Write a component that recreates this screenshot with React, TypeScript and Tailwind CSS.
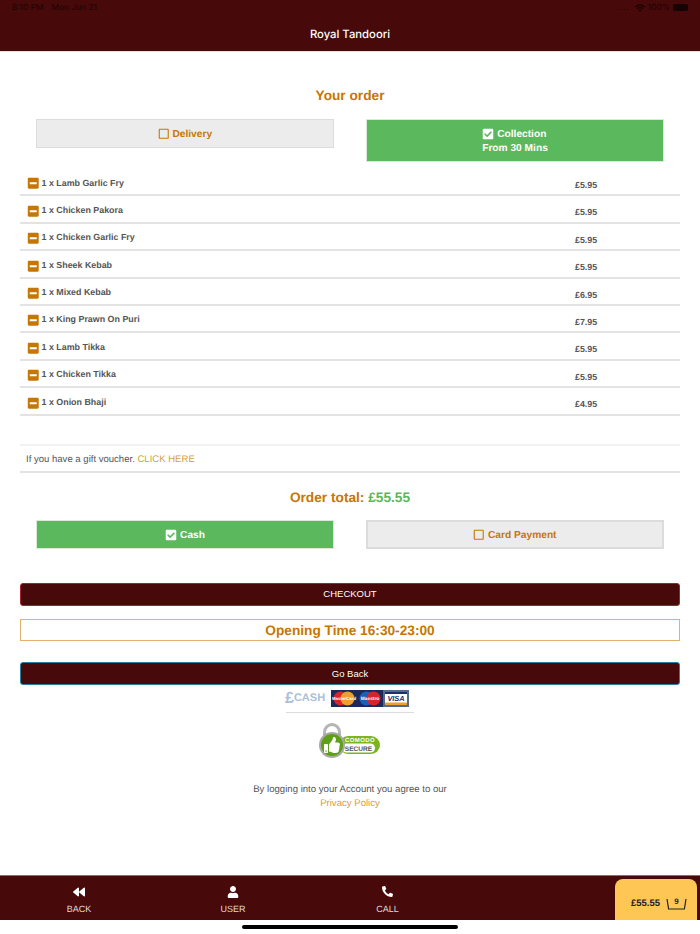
import { FaBackward, FaUser, FaPhoneAlt, FaCheckSquare, FaRegSquare, FaMinusSquare, FaWifi, FaThumbsUp } from "react-icons/fa";

const items: [string, string][] = [
  ["1 x Lamb Garlic Fry", "£5.95"],
  ["1 x Chicken Pakora", "£5.95"],
  ["1 x Chicken Garlic Fry", "£5.95"],
  ["1 x Sheek Kebab", "£5.95"],
  ["1 x Mixed Kebab", "£6.95"],
  ["1 x King Prawn On Puri", "£7.95"],
  ["1 x Lamb Tikka", "£5.95"],
  ["1 x Chicken Tikka", "£5.95"],
  ["1 x Onion Bhaji", "£4.95"],
];

function Choice({ label, sub, on, h, thick }: { label: string; sub?: string; on: boolean; h: string; thick?: boolean }) {
  return (
    <div className="px-4">
      <div
        className={`${h} ${thick ? "border-2" : "border"} flex flex-col items-center text-[10.2px] leading-[14px] font-bold ${
          on ? "bg-[#5cb85c] border-[#d9ead9] text-white" : "bg-[#ececec] border-[#dcdcdc] text-[#c67605]"
        }`}
      >
        <div className="flex flex-col items-start">
          <div className="flex items-center gap-[3px]">
            {on ? <FaCheckSquare className="text-[12px] -mt-[2px]" /> : <FaRegSquare className="text-[11.5px] -mt-[2px]" />}
            <span>{label}</span>
          </div>
          {sub && <div>{sub}</div>}
        </div>
      </div>
    </div>
  );
}

function PayLogos() {
  return (
    <div className="flex items-center justify-center h-[18px] gap-[4px] pr-[6px]">
      <div className="w-[42px] flex items-center text-[#a9bfd8] font-bold text-[11px] leading-none">
        <span className="text-[16px] leading-none">£</span>
        <span>CASH</span>
      </div>
      <div className="flex">
        <svg width="26" height="17" viewBox="0 0 26 17">
          <rect width="26" height="17" fill="#1b2a5c" />
          <circle cx="9.5" cy="8.5" r="7" fill="#d9222a" />
          <circle cx="16.5" cy="8.5" r="7" fill="#ee9f2d" />
          <text x="13" y="10" fontSize="4.4" fontWeight="700" fill="#fff" textAnchor="middle" fontFamily="Liberation Sans">MasterCard</text>
        </svg>
        <svg width="26" height="17" viewBox="0 0 26 17">
          <rect width="26" height="17" fill="#1b2a5c" />
          <circle cx="9.5" cy="8.5" r="7" fill="#1a5fc0" />
          <circle cx="16.5" cy="8.5" r="7" fill="#d9222a" />
          <text x="13" y="10" fontSize="4.8" fontWeight="700" fill="#fff" textAnchor="middle" fontFamily="Liberation Sans">Maestro</text>
        </svg>
        <svg width="26" height="17" viewBox="0 0 26 17">
          <rect width="26" height="17" fill="#54698c" />
          <rect x="2" y="2" width="22" height="13" fill="#fff" />
          <rect x="2" y="2" width="22" height="2" fill="#1b2f6e" />
          <rect x="2" y="12.5" width="22" height="2.5" fill="#ee9f2d" />
          <text x="13" y="11" fontSize="7.4" fontWeight="700" fontStyle="italic" fill="#1b2f6e" textAnchor="middle" fontFamily="Liberation Sans">VISA</text>
        </svg>
      </div>
    </div>
  );
}

function Comodo() {
  return (
    <svg width="62" height="36" viewBox="0 0 62 36">
      <path d="M5.5 16V9.5a7.5 8 0 0 1 15 0V16" fill="none" stroke="#b5b5b5" strokeWidth="3" />
      <rect x="20" y="13" width="41" height="18" rx="9" fill="#7ab51d" />
      <rect x="23" y="20.5" width="33" height="9" rx="4.5" fill="#fff" />
      <text x="41" y="19.4" fontSize="6" fontWeight="700" fill="#fff" textAnchor="middle" fontFamily="Liberation Sans" letterSpacing="0.4">COMODO</text>
      <text x="39.5" y="27.6" fontSize="6.6" fontWeight="700" fill="#555" textAnchor="middle" fontFamily="Liberation Sans">SECURE</text>
      <circle cx="13" cy="22" r="13" fill="#a8a8a8" />
      <circle cx="13" cy="22" r="11" fill="#5ea015" />
      <foreignObject x="5" y="14" width="16" height="16">
        <FaThumbsUp className="text-white text-[16px]" />
      </foreignObject>
    </svg>
  );
}

function Basket() {
  return (
    <div className="relative w-[21px] h-[13px]">
      <svg width="21" height="13" viewBox="0 0 21 13" className="absolute inset-0">
        <path d="M1 1l1.6 10h15.8L20 1" fill="none" stroke="#222" strokeWidth="1.2" />
      </svg>
      <span className="absolute left-0 right-0 top-[-1px] text-center text-[8px] leading-[10px] font-bold text-[#222]">9</span>
    </div>
  );
}

export default function App() {
  return (
    <div className="h-[934px] w-[700px] bg-white flex flex-col font-['Liberation_Sans',Arial,sans-serif] [text-rendering:geometricPrecision] overflow-hidden">
      <header className="bg-[#470909] h-[52px] border-b border-[#e9dede] shrink-0 flex flex-col">
        <div className="h-[16px] flex items-center justify-between pl-[12px] pr-[12px] text-[8.4px] text-[#1c0403] font-['Inter',sans-serif]">
          <div className="flex gap-[8px]">
            <span>8:10 PM</span>
            <span>Mon Jun 21</span>
          </div>
          <div className="flex items-center gap-[3px]">
            <span className="tracking-[1px] mr-[2px]">....</span>
            <FaWifi className="text-[10px] text-[#150403]" />
            <span>100%</span>
            <div className="w-[15px] h-[7px] rounded-[2px] bg-[#150403]" />
          </div>
        </div>
        <h1 className="text-white text-[11.3px] text-center font-medium font-['Inter',sans-serif] leading-[14px] mt-[11px]">Royal Tandoori</h1>
      </header>

      <main className="flex-1 px-5 flex flex-col">
        <h2 className="text-[#c67605] text-[13.7px] font-bold text-center leading-[18px] mt-[35px]">Your order</h2>

        <div className="grid grid-cols-2 items-start mt-[14px]">
          <Choice label="Delivery" on={false} h="h-[29px] pt-[8px]" />
          <Choice label="Collection" sub="From 30 Mins" on h="h-[43px] pt-[8px]" />
        </div>

        <ul className="mt-[7px]">
          {items.map(([name, price]) => (
            <li key={name} className="h-[27.4px] border-b-2 border-[#e3e3e3] flex items-center pl-[7px] text-[#555] text-[8.9px] font-bold">
              <div className="flex items-center gap-[2px] flex-1 pt-[4px]">
                <FaMinusSquare className="text-[#c67605] text-[12.5px]" />
                <span className="-mt-[1px]">{name}</span>
              </div>
              <span className="w-[105px] pt-[8px]">{price}</span>
            </li>
          ))}
        </ul>

        <div className="mt-[28px] h-[29px] border-t-2 border-b-2 border-t-[#f2f2f2] border-b-[#e3e3e3] flex items-center pl-[6px] pt-[4px] text-[9.55px] text-[#555]">
          <span>If you have a gift voucher.&nbsp;</span>
          <span className="text-[#d5a03f]">CLICK HERE</span>
        </div>

        <div className="text-[13.7px] font-bold text-center leading-[18px] mt-[16px] text-[#c67605]">
          Order total: <span className="text-[#5cb85c]">£55.55</span>
        </div>

        <div className="grid grid-cols-2 mt-[13px]">
          <Choice label="Cash" on h="h-[29px] pt-[8px]" />
          <Choice label="Card Payment" on={false} h="h-[29px] pt-[7px]" thick />
        </div>

        <button className="mt-[34px] h-[23px] pt-[1px] bg-[#470909] border border-[#a5222c] rounded-[3px] text-white text-[9.5px]">CHECKOUT</button>

        <div className="mt-[13px] h-[22px] pt-[4px] border border-[#e3b06f] flex items-center justify-center text-[#c67605] text-[13.7px] font-bold">
          Opening Time 16:30-23:00
        </div>

        <button className="mt-[21px] h-[23px] pt-[2px] bg-[#470909] border border-[#2a7f9c] rounded-[3px] text-white text-[9.5px]">Go Back</button>

        <div className="mt-[5px]">
          <PayLogos />
        </div>
        <div className="w-[128px] border-t border-[#dcdcdc] mx-auto mt-[4px]" />
        <div className="flex justify-center mt-[10px]">
          <Comodo />
        </div>

        <p className="text-[9.6px] text-[#555] text-center leading-[14px] mt-[24px]">By logging into your Account you agree to our</p>
        <p className="text-[9.6px] text-[#d5a03f] text-center leading-[14px]">Privacy Policy</p>
      </main>

      <footer className="relative h-[45px] bg-[#470909] border-t border-[#8f6a6a] shrink-0 flex text-[#ddd] text-[9px]">
        <div className="w-[158px] flex flex-col items-center pt-[10px]">
          <FaBackward className="text-white text-[12px]" />
          <span className="mt-[6px] leading-[10px]">BACK</span>
        </div>
        <div className="w-[150px] flex flex-col items-center pt-[10px]">
          <FaUser className="text-white text-[12px]" />
          <span className="mt-[6px] leading-[10px]">USER</span>
        </div>
        <div className="w-[159px] flex flex-col items-center pt-[10px]">
          <FaPhoneAlt className="text-white text-[11px] mb-[1px]" />
          <span className="mt-[6px] leading-[10px]">CALL</span>
        </div>
        <div className="absolute left-[615px] top-[3px] w-[82px] h-[41px] rounded-t-[8px] bg-[#fdc655] flex items-center justify-center gap-[6px] pt-[10px] pl-[6px] text-[#222] text-[9.5px] font-bold">
          <span>£55.55</span>
          <Basket />
        </div>
      </footer>

      <div className="h-[14px] shrink-0 flex justify-center items-start pt-[5px]">
        <div className="w-[216px] h-[4px] rounded-full bg-black" />
      </div>
    </div>
  );
}
